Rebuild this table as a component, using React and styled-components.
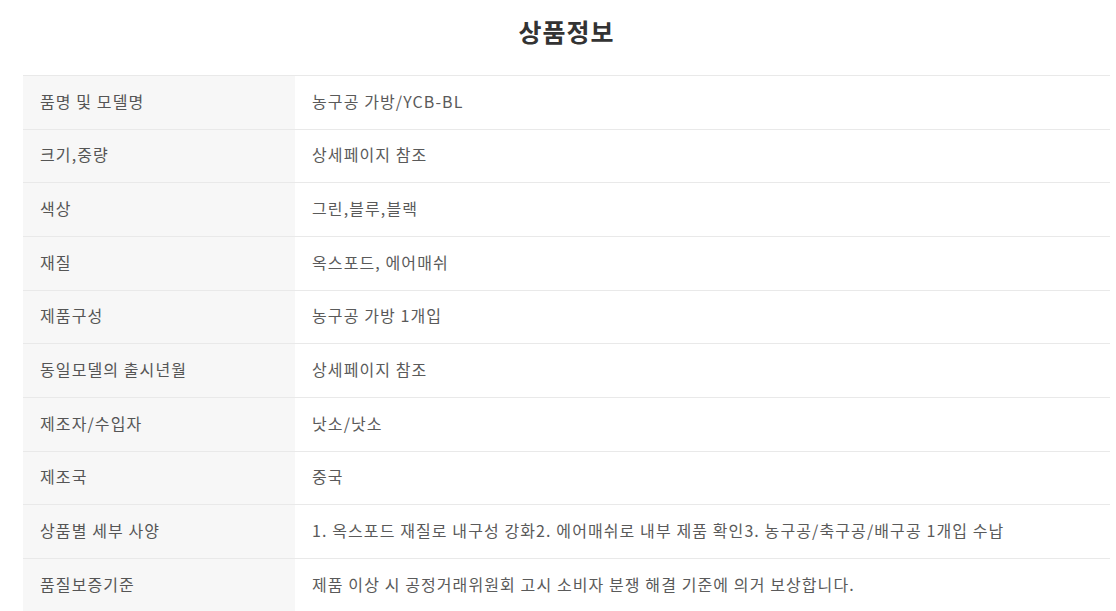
import React from 'react';
import styled, { createGlobalStyle } from 'styled-components';

const GlobalStyle = createGlobalStyle`
  body {
    margin: 0;
    background: #fff;
    font-family: "Noto Sans CJK KR", "Noto Sans", sans-serif;
  }
`;

const Page = styled.div`
  padding: 0 6px 0 23px;
`;

const Title = styled.h2`
  margin: 0;
  height: 75px;
  display: flex;
  align-items: center;
  justify-content: center;
  padding-bottom: 14px;
  box-sizing: border-box;
  font-size: 25px;
  font-weight: 700;
  color: #333;
  letter-spacing: 1px;
`;

const Table = styled.div`
  border-top: 1px solid #e9e9e9;
`;

const Row = styled.div`
  display: grid;
  grid-template-columns: 272px 1fr;
  height: 53.67px;
  box-sizing: border-box;
  border-bottom: 1px solid #e9e9e9;
`;

const Cell = styled.div`
  display: flex;
  align-items: center;
  padding: 0 17px 3px;
  font-size: 16px;
  letter-spacing: 1.1px;
  color: ${p => (p.$head ? '#555' : '#5a5a5a')};
  background: ${p => (p.$head ? '#f7f7f7' : '#fff')};
  white-space: nowrap;
`;

const rows = [
  ['품명 및 모델명', '농구공 가방/YCB-BL'],
  ['크기,중량', '상세페이지 참조'],
  ['색상', '그린,블루,블랙'],
  ['재질', '옥스포드, 에어매쉬'],
  ['제품구성', '농구공 가방 1개입'],
  ['동일모델의 출시년월', '상세페이지 참조'],
  ['제조자/수입자', '낫소/낫소'],
  ['제조국', '중국'],
  ['상품별 세부 사양', '1. 옥스포드 재질로 내구성 강화2. 에어매쉬로 내부 제품 확인3. 농구공/축구공/배구공 1개입 수납'],
  ['품질보증기준', '제품 이상 시 공정거래위원회 고시 소비자 분쟁 해결 기준에 의거 보상합니다.'],
];

const App = () => (
  <>
    <GlobalStyle />
    <Page>
      <Title>상품정보</Title>
      <Table>
        {rows.map(([label, value]) => (
          <Row key={label}>
            <Cell $head>{label}</Cell>
            <Cell>{value}</Cell>
          </Row>
        ))}
      </Table>
    </Page>
  </>
);

export default App;
